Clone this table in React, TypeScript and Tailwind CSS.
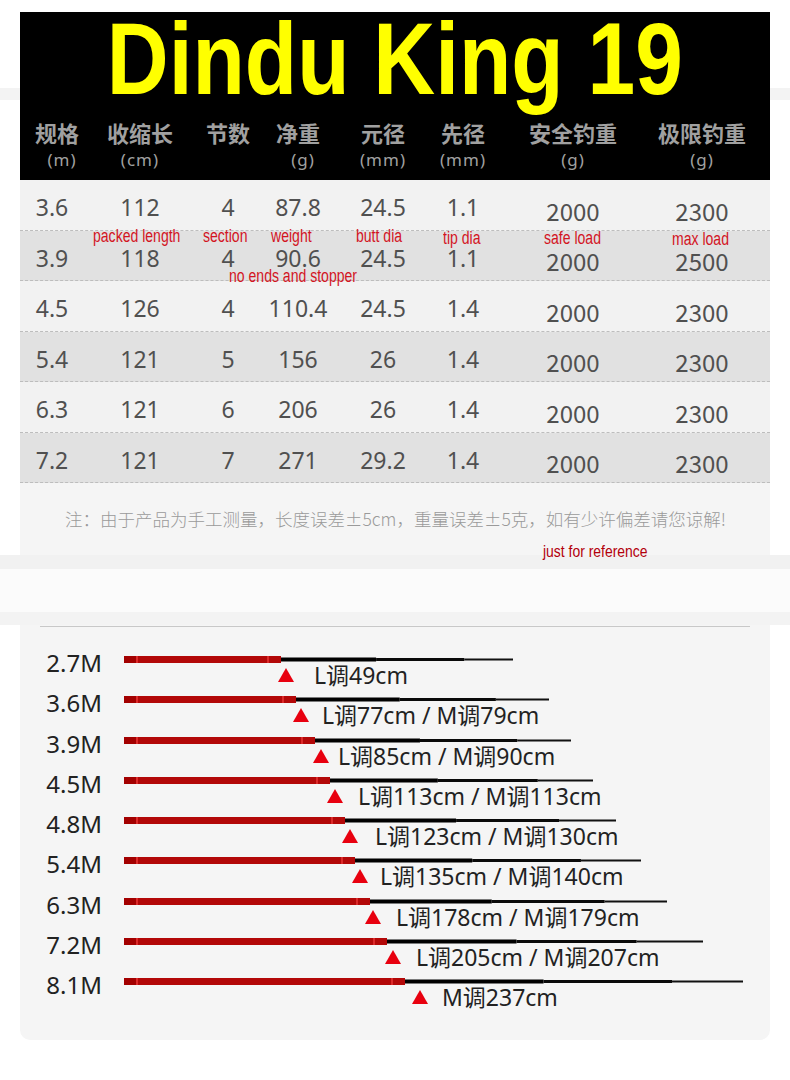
const cols = 'grid grid-cols-[64px_112px_64px_76px_94px_66px_154px_104px]'

const heads = [
  { name: '规格', unit: '(m)' },
  { name: '收缩长', unit: '(cm)' },
  { name: '节数', unit: '' },
  { name: '净重', unit: '(g)' },
  { name: '元径', unit: '(mm)' },
  { name: '先径', unit: '(mm)' },
  { name: '安全钓重', unit: '(g)' },
  { name: '极限钓重', unit: '(g)' },
]

const specs = [
  ['3.6', '112', '4', '87.8', '24.5', '1.1', '2000', '2300'],
  ['3.9', '118', '4', '90.6', '24.5', '1.1', '2000', '2500'],
  ['4.5', '126', '4', '110.4', '24.5', '1.4', '2000', '2300'],
  ['5.4', '121', '5', '156', '26', '1.4', '2000', '2300'],
  ['6.3', '121', '6', '206', '26', '1.4', '2000', '2300'],
  ['7.2', '121', '7', '271', '29.2', '1.4', '2000', '2300'],
]

// red notes written over the table, positions relative to the table's corner
const notes = [
  { text: 'packed length', x: 73, y: 47 },
  { text: 'section', x: 183, y: 47 },
  { text: 'weight', x: 251, y: 47 },
  { text: 'butt dia', x: 336, y: 47 },
  { text: 'tip dia', x: 423, y: 49 },
  { text: 'safe load', x: 524, y: 49 },
  { text: 'max load', x: 652, y: 50 },
  { text: 'no ends and stopper', x: 209, y: 87 },
]

// x values are page coordinates
const rods = [
  { label: '2.7M', red: 281, black: 513, tri: 278, text: 314, action: 'L调49cm' },
  { label: '3.6M', red: 296, black: 549, tri: 293, text: 322, action: 'L调77cm / M调79cm' },
  { label: '3.9M', red: 315, black: 571, tri: 313, text: 338, action: 'L调85cm / M调90cm' },
  { label: '4.5M', red: 330, black: 593, tri: 327, text: 358, action: 'L调113cm / M调113cm' },
  { label: '4.8M', red: 345, black: 616, tri: 342, text: 375, action: 'L调123cm / M调130cm' },
  { label: '5.4M', red: 355, black: 641, tri: 352, text: 380, action: 'L调135cm / M调140cm' },
  { label: '6.3M', red: 370, black: 667, tri: 365, text: 396, action: 'L调178cm / M调179cm' },
  { label: '7.2M', red: 387, black: 703, tri: 385, text: 416, action: 'L调205cm / M调207cm' },
  { label: '8.1M', red: 405, black: 743, tri: 412, text: 442, action: 'M调237cm' },
]

const BAR_START = 124

function RodBar({ red, black }: { red: number; black: number }) {
  const w = black - BAR_START
  const r = red - BAR_START
  const b = black - red
  const s1 = b * 0.41
  const s2 = b * 0.38
  const s3 = b - s1 - s2
  return (
    <svg width={w} height={24} viewBox={`0 0 ${w} 24`} className="block shrink-0">
      <rect x={0} y={5} width={r} height={7} fill="#b30808" />
      <rect x={0} y={5} width={12} height={7} fill="#a30000" />
      <rect x={12} y={5} width={2} height={7} fill="#dc2a2a" />
      <rect x={r - 14} y={5} width={2} height={7} fill="#dc2a2a" />
      <rect x={r} y={6.5} width={s1} height={4} fill="#000" />
      <rect x={r + s1} y={7} width={s2} height={3} fill="#0a0a0a" />
      <rect x={r + s1 + s2} y={7.5} width={s3} height={2} fill="#111" />
    </svg>
  )
}

function Triangle() {
  return (
    <svg width={16} height={14} viewBox="0 0 16 14" className="block shrink-0">
      <polygon points="8,0 16,14 0,14" fill="#e8000f" />
    </svg>
  )
}

export default function App() {
  return (
    <div className="w-[790px] h-[1080px] bg-white font-['Noto_Sans','Noto_Sans_CJK_SC',sans-serif]">
      {/* banner */}
      <div className="pt-[12px] bg-[linear-gradient(to_bottom,#ffffff_88px,#f3f3f3_88px,#f3f3f3_100px,#ffffff_100px)]">
        <div className="mx-[20px] h-[168px] bg-black pt-[7px]">
          <div className="text-center text-[102px] leading-[80px] font-bold text-[#ffff00] whitespace-nowrap font-['Liberation_Sans',sans-serif]">
            <span className="inline-block scale-x-[0.84]">Dindu King 19</span>
          </div>
          <div className={`${cols} mt-[20px] text-[#a0a0a0]`}>
            {heads.map((h, i) => (
              <div
                key={h.name}
                className={`text-center text-[22px] leading-[26px] font-bold whitespace-nowrap font-['Noto_Sans_CJK_SC',sans-serif] ${i === 0 ? 'pl-[10px]' : ''}`}
              >
                {h.name}
              </div>
            ))}
          </div>
          <div className={`${cols} mt-[5px] text-[#a0a0a0]`}>
            {heads.map((h, i) => (
              <div
                key={h.name}
                className={`text-center text-[17px] leading-[20px] tracking-[1px] whitespace-nowrap ${i === 0 ? 'pl-[20px]' : ''} ${i === 3 ? 'pl-[10px]' : ''}`}
              >
                {h.unit}
              </div>
            ))}
          </div>
        </div>
      </div>

      {/* spec table */}
      <div className="relative mx-[20px]">
        {specs.map((row, r) => (
          <div
            key={row[0]}
            className={`${cols} h-[50.5px] border-b border-dashed border-[#bdbdbd] ${r % 2 === 1 ? 'bg-[#e1e1e1]' : 'bg-[#f2f2f2]'}`}
          >
            {row.map((v, c) =>
              c < 6 ? (
                <div key={c} className="flex items-center justify-center pt-[5px] text-[23px] text-[#505050]">
                  {v}
                </div>
              ) : (
                <div key={c} className="flex items-center justify-center pt-[12px] text-[24px] text-[#505050] font-['Noto_Sans_CJK_SC',sans-serif]">
                  {v}
                </div>
              )
            )}
          </div>
        ))}
        {notes.map((n) => (
          <span
            key={n.text}
            className="absolute origin-left scale-x-[0.78] whitespace-nowrap text-[18px] leading-[18px] text-[#d3141f] font-['Liberation_Sans',sans-serif]"
            style={{ left: n.x, top: n.y }}
          >
            {n.text}
          </span>
        ))}
      </div>

      {/* tolerance note */}
      <div className="mx-[20px] h-[72px] bg-[#f5f5f5] pt-[24px]">
        <div className="pl-[45px] text-[17.5px] leading-[24px] font-light text-[#9a9a9a] whitespace-nowrap font-['Noto_Sans_CJK_SC',sans-serif]">
          注：由于产品为手工测量，长度误差±5cm，重量误差±5克，如有少许偏差请您谅解!
        </div>
        <div className="mt-[8px] pl-[523px] whitespace-nowrap">
          <span className="inline-block origin-left scale-x-[0.82] text-[17px] leading-[17px] text-[#b3000c] font-['Liberation_Sans',sans-serif]">
            just for reference
          </span>
        </div>
      </div>
      <div className="h-[14px] bg-[#f1f1f1]" />
      <div className="h-[43px] bg-[#fbfbfb]" />
      <div className="h-[13px] bg-[#f3f3f3]" />

      {/* rod action chart */}
      <div className="mx-[20px] h-[415px] rounded-b-[10px] bg-[#f5f5f5] pt-[1px]">
        <div className="mx-[20px] h-px bg-[#c8c8c8]" />
        <div className="mt-[24px]">
          {rods.map((rod) => (
            <div key={rod.label} className="h-[40.25px]">
              <div className="flex h-[24px] items-center">
                <div className="w-[82px] text-right text-[24px] leading-[24px] text-[#222]">{rod.label}</div>
                <div className="ml-[22px]">
                  <RodBar red={rod.red} black={rod.black} />
                </div>
              </div>
              <div className="-mt-[8px] flex h-[16px] items-center">
                <div style={{ marginLeft: rod.tri - 20 }}>
                  <Triangle />
                </div>
                <div
                  className="whitespace-nowrap text-[23px] leading-[16px] text-[#222]"
                  style={{ marginLeft: rod.text - rod.tri - 16 }}
                >
                  {rod.action}
                </div>
              </div>
            </div>
          ))}
        </div>
      </div>
    </div>
  )
}
